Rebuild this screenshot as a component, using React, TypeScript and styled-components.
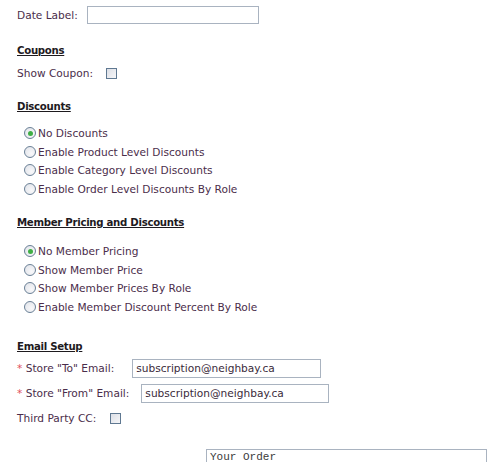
import React from 'react'
import styled, {createGlobalStyle} from 'styled-components'

const GlobalStyle = createGlobalStyle`
  html, body {
    margin: 0;
    padding: 0;
    background: #ffffff;
  }
  body {
    font-family: "DejaVu Sans", Verdana, sans-serif;
    font-size: 10.6px;
    color: #4a2d4a;
  }
`

const discounts = [
  'No Discounts',
  'Enable Product Level Discounts',
  'Enable Category Level Discounts',
  'Enable Order Level Discounts By Role',
]

const memberPricing = [
  'No Member Pricing',
  'Show Member Price',
  'Show Member Prices By Role',
  'Enable Member Discount Percent By Role',
]

const App = () => {
  return (
    <Page>
      <GlobalStyle />

      <FieldRow $top={0} $h={18}>
        <Label>Date Label:</Label>
        <TextBox $w={172} $h={18} $left={9} />
      </FieldRow>

      <Heading $top={20}>Coupons</Heading>
      <FieldRow $top={6} $h={18}>
        <Label>Show Coupon:</Label>
        <Check $left={13} />
      </FieldRow>

      <Heading $top={18}>Discounts</Heading>
      <RadioList $top={9.7}>
        {discounts.map((d, i) => (
          <RadioRow key={d}>
            <Radio $checked={i === 0} />
            <span>{d}</span>
          </RadioRow>
        ))}
      </RadioList>

      <Heading $top={17.7}>Member Pricing and Discounts</Heading>
      <RadioList $top={11.7}>
        {memberPricing.map((d, i) => (
          <RadioRow key={d}>
            <Radio $checked={i === 0} />
            <span>{d}</span>
          </RadioRow>
        ))}
      </RadioList>

      <Heading $top={23.7}>Email Setup</Heading>
      <FieldRow $top={4} $h={20}>
        <Label><Req>*</Req> Store "To" Email:</Label>
        <TextBox $w={189} $h={19} $left={18} defaultValue="subscription@neighbay.ca" />
      </FieldRow>
      <FieldRow $top={5} $h={20}>
        <Label><Req>*</Req> Store "From" Email:</Label>
        <TextBox $w={188} $h={19} $left={12} defaultValue="subscription@neighbay.ca" />
      </FieldRow>
      <FieldRow $top={5} $h={20}>
        <Label>Third Party CC:</Label>
        <Check $left={14} />
      </FieldRow>

      <OrderBox>Your Order</OrderBox>
    </Page>
  )
}

export default App

const Page = styled.div`
  padding: 6px 0 0 17px;
  height: 456px;
  overflow: hidden;
`

const FieldRow = styled.div<{$top: number; $h: number}>`
  display: flex;
  align-items: center;
  margin-top: ${p => p.$top}px;
  height: ${p => p.$h}px;
`

const Label = styled.span`
  white-space: nowrap;
`

const Req = styled.span`
  color: #e0505a;
`

const TextBox = styled.input<{$w: number; $h: number; $left: number}>`
  box-sizing: border-box;
  width: ${p => p.$w}px;
  height: ${p => p.$h}px;
  margin: 0 0 0 ${p => p.$left}px;
  padding: 0 3px;
  border: 1px solid #a9b3c0;
  background: #ffffff;
  font-family: "DejaVu Sans", Verdana, sans-serif;
  font-size: 10.6px;
  color: #3a2a3a;
  outline: none;
`

const Check = styled.span<{$left: number}>`
  display: inline-block;
  box-sizing: border-box;
  width: 11px;
  height: 11px;
  margin-left: ${p => p.$left}px;
  border: 1px solid #5f7891;
  background: linear-gradient(135deg, #dcdfe6 0%, #f6f6f8 100%);
`

const Heading = styled.div<{$top: number}>`
  margin-top: ${p => p.$top}px;
  height: 14px;
  line-height: 14px;
  font-size: 10.2px;
  letter-spacing: -0.3px;
  font-weight: bold;
  text-decoration: underline;
  color: #1e1a1e;
`

const RadioList = styled.div<{$top: number}>`
  margin-top: ${p => p.$top}px;
  padding-left: 7px;
`

const RadioRow = styled.div`
  display: flex;
  align-items: center;
  height: 18.67px;
  gap: 2px;
  white-space: nowrap;
`

const Radio = styled.span<{$checked?: boolean}>`
  position: relative;
  display: inline-block;
  box-sizing: border-box;
  width: 12px;
  height: 12px;
  border-radius: 50%;
  border: 1px solid #6a8096;
  background: radial-gradient(circle at 65% 65%, #f8f8fa 0%, #dfe2e8 100%);

  &::after {
    content: '';
    display: ${p => (p.$checked ? 'block' : 'none')};
    position: absolute;
    left: 2.5px;
    top: 2.5px;
    width: 5px;
    height: 5px;
    border-radius: 50%;
    background: #3fae45;
  }
`

const OrderBox = styled.div`
  box-sizing: border-box;
  margin: 21px 0 0 189px;
  width: 281px;
  height: 40px;
  padding: 1px 3px;
  border: 1px solid #a9b3c0;
  font-family: "Liberation Mono", "Courier New", monospace;
  font-size: 11px;
  line-height: 13px;
  color: #3a3a3a;
`
